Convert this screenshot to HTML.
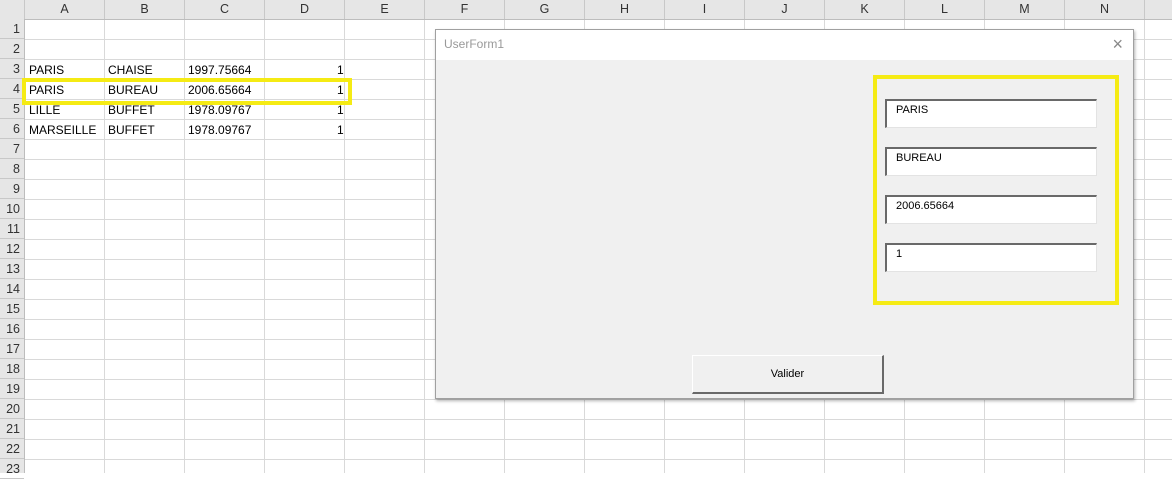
<!DOCTYPE html><html><head><style>
body{margin:0;width:1172px;height:473px;overflow:hidden;background:#fff;font-family:"Liberation Sans",sans-serif;position:relative}
.grid{position:absolute;left:25px;top:19px;width:1147px;height:454px;
background-image:linear-gradient(to right,#d9d9d9 1px,transparent 1px),linear-gradient(to bottom,#d9d9d9 1px,transparent 1px);
background-size:80px 20px;background-position:-1px 0}
.ch{position:absolute;top:0;left:0;width:1172px;height:19px;background:#e6e6e6;border-bottom:1px solid #bdbdbd}
.ch div{position:absolute;top:0;width:79px;height:19px;line-height:19px;text-align:center;font-size:12.5px;color:#333;border-right:1px solid #c8c8c8}
.rh{position:absolute;left:0;top:19px;width:24px;height:454px;background:#e6e6e6;border-right:1px solid #bdbdbd}
.rh div{height:19px;border-bottom:1px solid #c8c8c8;text-align:right;padding-right:4px;font-size:12.5px;line-height:21px;color:#333}
.c{position:absolute;font-size:12px;color:#000;line-height:21px}
.dlg{position:absolute;left:435px;top:29px;width:697px;height:368px;background:#f0f0f0;border:1px solid #a0a0a0;box-shadow:1px 2px 3px rgba(0,0,0,.3)}
.tb{height:30px;background:#fff;font-size:12px;color:#999;line-height:28px;padding-left:8px}
.tx{position:absolute;left:449px;width:212px;height:29px;background:#fff;border-top:2px solid #696969;border-left:2px solid #696969;border-right:1px solid #e3e3e3;border-bottom:1px solid #e3e3e3;font-size:11px;line-height:18px;padding-left:9px;box-sizing:border-box;color:#000}
</style></head><body>
<div class="grid"></div>
<div class="ch"><div style="left:0;width:24px;background:#e6e6e6"></div>
<div style="left:25px">A</div><div style="left:105px">B</div><div style="left:185px">C</div><div style="left:265px">D</div><div style="left:345px">E</div><div style="left:425px">F</div><div style="left:505px">G</div><div style="left:585px">H</div><div style="left:665px">I</div><div style="left:745px">J</div><div style="left:825px">K</div><div style="left:905px">L</div><div style="left:985px">M</div><div style="left:1065px">N</div><div style="left:1145px">O</div></div>
<div class="rh"><div>1</div><div>2</div><div>3</div><div>4</div><div>5</div><div>6</div><div>7</div><div>8</div><div>9</div><div>10</div><div>11</div><div>12</div><div>13</div><div>14</div><div>15</div><div>16</div><div>17</div><div>18</div><div>19</div><div>20</div><div>21</div><div>22</div><div>23</div></div>
<div class="c" style="left:29px;top:60px">PARIS</div><div class="c" style="left:108px;top:60px">CHAISE</div><div class="c" style="left:188px;top:60px">1997.75664</div><div class="c" style="left:337px;top:60px">1</div>
<div class="c" style="left:29px;top:80px">PARIS</div><div class="c" style="left:108px;top:80px">BUREAU</div><div class="c" style="left:188px;top:80px">2006.65664</div><div class="c" style="left:337px;top:80px">1</div>
<div class="c" style="left:29px;top:100px">LILLE</div><div class="c" style="left:108px;top:100px">BUFFET</div><div class="c" style="left:188px;top:100px">1978.09767</div><div class="c" style="left:337px;top:100px">1</div>
<div class="c" style="left:29px;top:120px">MARSEILLE</div><div class="c" style="left:108px;top:120px">BUFFET</div><div class="c" style="left:188px;top:120px">1978.09767</div><div class="c" style="left:337px;top:120px">1</div>
<div style="position:absolute;left:22px;top:78px;width:322px;height:19px;border:4px solid #f5eb14"></div>
<div class="dlg"><div class="tb">UserForm1</div>
<div style="position:absolute;right:10px;top:4px;font-size:18px;color:#888;font-weight:100">×</div>
<div style="position:absolute;left:437px;top:45px;width:238px;height:222px;border:4px solid #f5eb14"></div>
<div class="tx" style="top:69px">PARIS</div>
<div class="tx" style="top:117px">BUREAU</div>
<div class="tx" style="top:165px">2006.65664</div>
<div class="tx" style="top:213px">1</div>
<div style="position:absolute;left:256px;top:325px;width:192px;height:39px;box-sizing:border-box;border-top:1px solid #fff;border-left:1px solid #fff;border-right:2px solid #696969;border-bottom:2px solid #696969;font-size:11px;text-align:center;line-height:36px">Valider</div>
</div>
</body></html>
